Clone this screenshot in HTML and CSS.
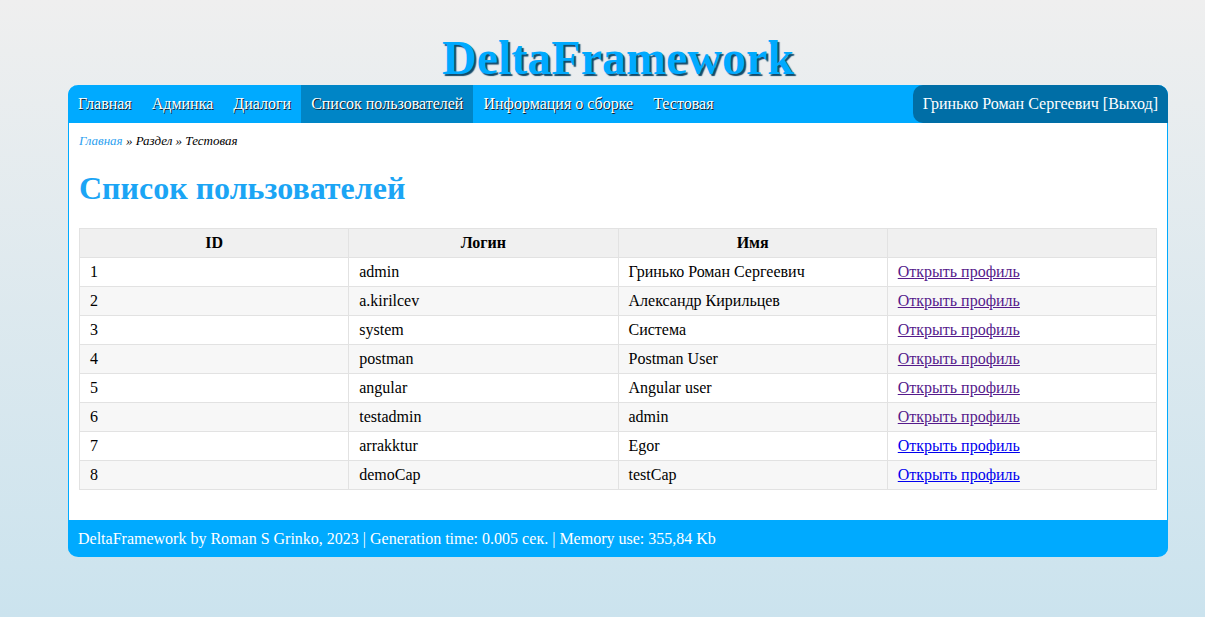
FILE: index.html
```html
<!DOCTYPE html>
<html lang="ru">
<head>
    <meta charset="UTF-8">
    <meta name="viewport" content="width=device-width, initial-scale=1.0">
    <title>Список пользователей</title>
    <link rel="stylesheet" href="styles.css">
</head>
<body>
    <h1 class="logo">DeltaFramework</h1>

    <div class="wrapper">
        <div class="menu">
            <ul class="menu-list">
                <li><a href="#">Главная</a></li>
                <li><a href="#">Админка</a></li>
                <li><a href="#">Диалоги</a></li>
                <li class="active"><a href="#">Список пользователей</a></li>
                <li><a href="#">Информация о сборке</a></li>
                <li><a href="#">Тестовая</a></li>
            </ul>
            <div class="user">Гринько Роман Сергеевич [<a href="#">Выход</a>]</div>
        </div>

        <div class="content">
            <div class="breadcrumbs"><a href="#">Главная</a> » Раздел » Тестовая</div>

            <h2 class="page-title">Список пользователей</h2>

            <table class="users">
                <thead>
                    <tr>
                        <th>ID</th>
                        <th>Логин</th>
                        <th>Имя</th>
                        <th></th>
                    </tr>
                </thead>
                <tbody>
                    <tr><td>1</td><td>admin</td><td>Гринько Роман Сергеевич</td><td><a class="visited" href="#">Открыть профиль</a></td></tr>
                    <tr><td>2</td><td>a.kirilcev</td><td>Александр Кирильцев</td><td><a class="visited" href="#">Открыть профиль</a></td></tr>
                    <tr><td>3</td><td>system</td><td>Система</td><td><a class="visited" href="#">Открыть профиль</a></td></tr>
                    <tr><td>4</td><td>postman</td><td>Postman User</td><td><a class="visited" href="#">Открыть профиль</a></td></tr>
                    <tr><td>5</td><td>angular</td><td>Angular user</td><td><a class="visited" href="#">Открыть профиль</a></td></tr>
                    <tr><td>6</td><td>testadmin</td><td>admin</td><td><a class="visited" href="#">Открыть профиль</a></td></tr>
                    <tr><td>7</td><td>arrakktur</td><td>Egor</td><td><a href="#">Открыть профиль</a></td></tr>
                    <tr><td>8</td><td>demoCap</td><td>testCap</td><td><a href="#">Открыть профиль</a></td></tr>
                </tbody>
            </table>
        </div>

        <div class="footer">
            DeltaFramework by Roman S Grinko, 2023 | Generation time: 0.005 сек. | Memory use: 355,84 Kb
        </div>
    </div>
</body>
</html>
```

FILE: styles.css
```css
html {
    min-height: 100%;
    background: linear-gradient(to bottom, #efefef 0%, #cbe3ee 100%);
}

body {
    margin: 0;
    padding: 0 0 0 31px;
    font-family: 'Liberation Serif', 'Times New Roman', serif;
    font-size: 16px;
    color: #000;
}

.logo {
    margin: 0;
    padding-top: 31px;
    height: 54px;
    text-align: center;
    font-size: 48px;
    line-height: 54px;
    font-weight: bold;
    color: #00aaff;
    text-shadow: 2px 2px 1px #124a6a;
}

.wrapper {
    width: 1098px;
    margin: 0 auto;
    border-left: 1px solid #00aaff;
    border-right: 1px solid #00aaff;
    border-radius: 10px;
    background: #fff;
}

.menu {
    display: flex;
    justify-content: space-between;
    background: #00aaff;
    border-radius: 10px 10px 0 0;
    height: 38px;
    margin: 0 -1px;
}

.menu-list {
    display: flex;
    margin: 0;
    padding: 0;
    list-style: none;
}

.menu-list li a {
    display: block;
    padding: 0 10px;
    line-height: 38px;
    color: #fff;
    text-decoration: none;
    text-shadow: 1px 1px 0 #10222e;
}

.menu-list li:first-child a {
    padding-left: 10px;
    border-top-left-radius: 10px;
}

.menu-list li.active a {
    background: #0085c6;
}

.user {
    background: #006ea6;
    color: #fff;
    padding: 0 10px;
    line-height: 38px;
    border-radius: 10px 10px 0 10px;
}

.user a {
    color: #fff;
    text-decoration: none;
}

.content {
    padding: 10px 10px 30px 10px;
}

.breadcrumbs {
    font-size: 13px;
    font-style: italic;
    line-height: 15px;
}

.breadcrumbs a {
    color: #2c9ff0;
    text-decoration: none;
}

.page-title {
    margin: 22px 0 21px 0;
    font-size: 32px;
    line-height: 37px;
    color: #1ba5f5;
}

.users {
    width: 100%;
    border-collapse: collapse;
    table-layout: fixed;
}

.users th,
.users td {
    border: 1px solid #e2e2e2;
    height: 28px;
    padding: 0 10px;
    line-height: 28px;
}

.users th {
    background: #f0f0f0;
    text-align: center;
    font-weight: bold;
}

.users td {
    text-align: left;
}

.users tbody tr:nth-child(even) td {
    background: #f7f7f7;
}

.users a {
    color: #0000ee;
}

.users a.visited {
    color: #551a8b;
}

.footer {
    background: #00aaff;
    color: #fff;
    height: 37px;
    line-height: 37px;
    padding: 0 10px;
    border-radius: 0 0 10px 10px;
    margin: 0 -1px;
}
```
